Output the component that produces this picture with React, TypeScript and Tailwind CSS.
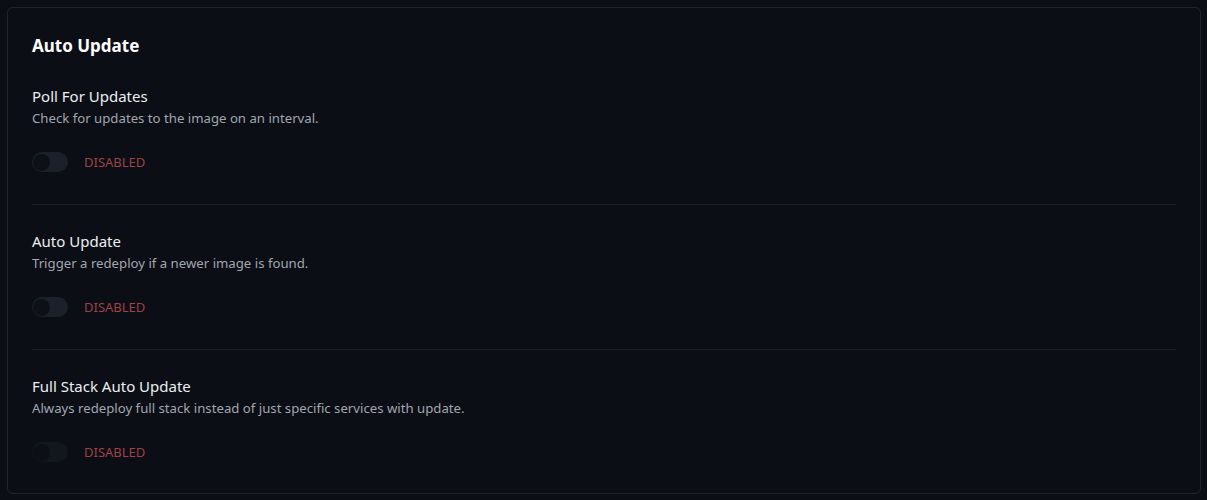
import React from "react";

interface Setting {
  label: string;
  description: string;
  disabled?: boolean;
}

const settings: Setting[] = [
  { label: "Poll For Updates", description: "Check for updates to the image on an interval." },
  { label: "Auto Update", description: "Trigger a redeploy if a newer image is found." },
  {
    label: "Full Stack Auto Update",
    description: "Always redeploy full stack instead of just specific services with update.",
    disabled: true,
  },
];

function Toggle({ disabled }: { disabled?: boolean }) {
  return (
    <button
      type="button"
      className={`relative h-5 w-9 rounded-full ${disabled ? "bg-[#12161d]" : "bg-[#1b2029]"}`}
    >
      <span
        className={`absolute left-[1px] top-[1.5px] h-[17px] w-[17px] rounded-full ${
          disabled ? "bg-[#0c0f15]" : "bg-[#0d1017]"
        }`}
      ></span>
    </button>
  );
}

export default function App() {
  return (
    <div className="min-h-[500px] bg-[#0b0e14] pt-[7px] pl-[7px] pr-[6px] pb-[6px] font-['Noto_Sans',sans-serif]">
      <div className="rounded-md border border-[#1f242d] bg-[#0b0e14] px-6 pt-[26px] pb-[31px]">
        <h2 className="text-[17px] font-bold leading-6 text-white">Auto Update</h2>

        <div className="mt-[27px]">
          {settings.map((s, i) => (
            <div key={s.label}>
              {i > 0 && <div className="mt-8 mb-[25px] h-px bg-[#1a1e27]"></div>}
              <div className="text-[15px] leading-[22px] text-[#eceef1]">{s.label}</div>
              <div className="mt-px text-[13.2px] leading-5 text-[#a1a6b0]">{s.description}</div>
              <div className="mt-6 flex items-center gap-4">
                <Toggle disabled={s.disabled} />
                <span className="text-[13px] leading-5 text-[#9e4248]">DISABLED</span>
              </div>
            </div>
          ))}
        </div>
      </div>
    </div>
  );
}
